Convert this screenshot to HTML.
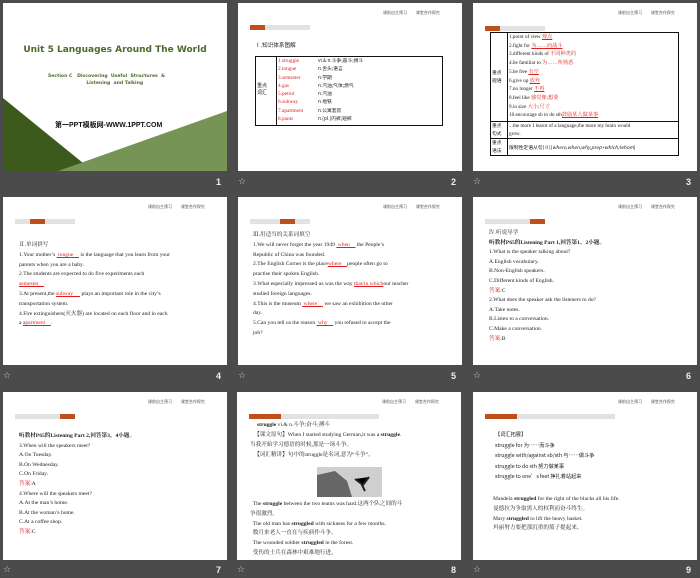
<!DOCTYPE html>
<html><head><meta charset="utf-8"><style>
*{margin:0;padding:0;box-sizing:border-box}
body{width:700px;height:578px;background:#4b4b4b;position:relative;overflow:hidden;font-family:"Liberation Serif","Noto Serif CJK SC",serif}
.s{position:absolute;width:224px;height:168px;background:#fff;overflow:hidden;color:#222}
.s>*{position:absolute;white-space:nowrap}
.n{position:absolute;color:#eee;font:bold 9px "Liberation Sans",sans-serif}
.st{position:absolute;color:#ccc;font:9px "DejaVu Sans",sans-serif}
.hd{top:7px;left:145px;font:4px "Noto Sans CJK SC",sans-serif;color:#555;word-spacing:8px}
.tb{top:22px;left:12px;width:60px;height:5px;background:#e2e2e2}
.tb i{position:absolute;top:0;width:15px;height:5px;background:#c0501a}
.t{font-size:5.6px;line-height:9.5px;color:#222}
.r{color:#e02020}
.u{text-decoration:underline}
</style></head><body>

<!-- slide 1 -->
<div class="s" style="left:3px;top:3px">
<div style="left:0;width:224px;top:42px;text-align:center;font:bold 9px 'DejaVu Sans',sans-serif;color:#4e6a2a">Unit 5 Languages Around The World</div>
<div style="left:45px;top:70px;font:bold 4.6px 'DejaVu Sans',sans-serif;color:#4e6a2a;line-height:7px">Section C &nbsp; Discovering &nbsp;Useful &nbsp;Structures &nbsp;&amp;<br>&nbsp;&nbsp;&nbsp;&nbsp;&nbsp;&nbsp;&nbsp;&nbsp;&nbsp;&nbsp;&nbsp;&nbsp;&nbsp;&nbsp;&nbsp;&nbsp;&nbsp;&nbsp;&nbsp;&nbsp;&nbsp;&nbsp;&nbsp;&nbsp;Listening &nbsp;and Talking</div>
<svg style="left:0;top:0" width="224" height="168"><polygon points="0,95 80,160 62,168 0,168" fill="#3b5a1c"/><polygon points="55,168 224,108 224,168" fill="#779457"/></svg>
<div style="left:52px;top:117px;font:bold 7px 'Liberation Sans','Noto Sans CJK SC',sans-serif;color:#111">第一PPT模板网-WWW.1PPT.COM</div>
</div>
<div class="n" style="left:216px;top:177px">1</div>

<!-- slide 2 -->
<div class="s" style="left:238px;top:3px">
<div class="hd">课前自主预习 课堂合作探究</div>
<div class="tb"><i style="left:0"></i></div>
<div class="t" style="left:17px;top:38px;font-family:'Noto Sans CJK SC',sans-serif">Ⅰ.知识体系图解</div>
<div style="left:17px;top:53px;width:188px;height:70px;border:1.3px solid #111"></div>
<div style="left:38px;top:53px;height:70px;border-left:1px solid #111"></div>
<div class="t" style="left:19px;top:79px;font-size:5px;line-height:7px;font-family:'Noto Sans CJK SC',sans-serif">重点<br>词汇</div>
<div class="t r" style="left:40px;top:54px;font-size:5.3px;line-height:8.3px">1.struggle<br>2.tongue<br>3.semester<br>4.gas<br>5.petrol<br>6.subway<br>7.apartment<br>8.pants</div>
<div class="t" style="left:80px;top:54px;font-size:4.8px;line-height:8.3px;font-family:'Noto Sans CJK SC',sans-serif">vi.&amp; n.斗争;奋斗;搏斗<br>n.舌头;语言<br>n.学期<br>n.汽油;气体;燃气<br>n.汽油<br>n.地铁<br>n.公寓套房<br>n.[pl.]内裤;短裤</div>
</div>
<div class="n" style="left:451px;top:177px">2</div>
<div class="st" style="left:238px;top:177px">☆</div>

<!-- slide 3 -->
<div class="s" style="left:473px;top:3px">
<div class="hd">课前自主预习 课堂合作探究</div>
<div class="tb" style="top:23px;left:12px"><i style="left:0"></i></div>
<div style="left:17px;top:29px;width:189px;height:124px;border:1.3px solid #111"></div>
<div style="left:34px;top:29px;height:124px;border-left:1px solid #111"></div>
<div style="left:17px;top:118px;width:189px;border-top:1px solid #111"></div>
<div style="left:17px;top:135px;width:189px;border-top:1px solid #111"></div>
<div class="t" style="left:19px;top:66px;font-size:4.8px;line-height:8px;font-family:'Noto Sans CJK SC',sans-serif">重点<br>短语</div>
<div class="t" style="left:19px;top:119px;font-size:4.8px;line-height:8px;font-family:'Noto Sans CJK SC',sans-serif">重点<br>句式</div>
<div class="t" style="left:19px;top:136px;font-size:4.8px;line-height:8px;font-family:'Noto Sans CJK SC',sans-serif">重点<br>语法</div>
<div class="t" style="left:36px;top:30px;font-size:5.2px;line-height:8.7px">1.point of view <span class="r u">观点</span><br>2.fight for <span class="r u">为……而战斗</span><br>3.different kinds of <span class="r">不同种类的</span><br>4.be familiar to <span class="r">为……所熟悉</span><br>5.be free <span class="r u">有空</span><br>6.give up <span class="r u">放弃</span><br>7.no longer <span class="r u">不再</span><br>8.feel like <span class="r">感觉像;想要</span><br>9.in size <span class="r">大小;尺寸</span><br>10.encourage sb to do sth<span class="r u">鼓励某人做某事</span></div>
<div class="t" style="left:36px;top:119px;font-size:5.2px;line-height:8px">...the more I learnt of a language,the more my brain would<br>grow.</div>
<div class="t" style="left:36px;top:140px;font-size:4.8px;font-family:'Noto Sans CJK SC',sans-serif">限制性定语从句(Ⅱ)(<i>where,when,why,prep+which/whom</i>)</div>
</div>
<div class="n" style="left:686px;top:177px">3</div>
<div class="st" style="left:473px;top:177px">☆</div>

<!-- slide 4 -->
<div class="s" style="left:3px;top:197px">
<div class="hd">课前自主预习 课堂合作探究</div>
<div class="tb"><i style="left:15px"></i></div>
<div class="t" style="left:16px;top:44px;line-height:9.8px">Ⅱ.单词拼写<br>1.Your mother’s <span class="r u">&nbsp;tongue&nbsp;&nbsp;&nbsp;&nbsp;</span> is the language that you learn from your<br>parents when you are a baby.<br>2.The students are expected to do five experiments each<br><span class="r u">semester&nbsp;&nbsp;&nbsp;&nbsp;</span>.<br>3.At present,the <span class="r u">subway&nbsp;&nbsp;&nbsp;&nbsp;&nbsp;</span> plays an important role in the city’s<br>transportation system.<br>4.Fire extinguishers(灭火器) are located on each floor and in each<br>a <span class="r u">apartment&nbsp;&nbsp;&nbsp;&nbsp;</span>.</div>
</div>
<div class="n" style="left:216px;top:371px">4</div>
<div class="st" style="left:3px;top:371px">☆</div>

<!-- slide 5 -->
<div class="s" style="left:238px;top:197px">
<div class="hd">课前自主预习 课堂合作探究</div>
<div class="tb"><i style="left:30px"></i></div>
<div class="t" style="left:15px;top:34px;line-height:9.8px">Ⅲ.用适当的关系词填空<br>1.We will never forget the year 1949 <span class="r u">&nbsp;when&nbsp;&nbsp;&nbsp;&nbsp;</span> the People’s<br>Republic of China was founded.<br>2.The English Corner is the place<span class="r u">where&nbsp;&nbsp;&nbsp;&nbsp;</span>people often go to<br>practise their spoken English.<br>3.What especially impressed us was the way <span class="r u">that/in which</span>our teacher<br>studied foreign languages.<br>4.This is the museum <span class="r u">&nbsp;where&nbsp;&nbsp;&nbsp;&nbsp;</span> we saw an exhibition the other<br>day.<br>5.Can you tell us the reason <span class="r u">&nbsp;why&nbsp;&nbsp;&nbsp;&nbsp;</span> you refused to accept the<br>job?</div>
</div>
<div class="n" style="left:451px;top:371px">5</div>
<div class="st" style="left:238px;top:371px">☆</div>

<!-- slide 6 -->
<div class="s" style="left:473px;top:197px">
<div class="hd">课前自主预习 课堂合作探究</div>
<div class="tb"><i style="left:45px"></i></div>
<div class="t" style="left:16px;top:32px;line-height:9.6px">Ⅳ.听说导学<br><b>听教材P65的Listening Part 1,回答第1、2小题。</b><br>1.What is the speaker talking about?<br>A.English vocabulary.<br>B.Non-English speakers.<br>C.Different kinds of English.<br><span class="r">答案</span>:C<br>2.What does the speaker ask the listeners to do?<br>A.Take notes.<br>B.Listen to a conversation.<br>C.Make a conversation.<br><span class="r">答案</span>:B</div>
</div>
<div class="n" style="left:686px;top:371px">6</div>
<div class="st" style="left:473px;top:371px">☆</div>

<!-- slide 7 -->
<div class="s" style="left:3px;top:392px">
<div class="hd">课前自主预习 课堂合作探究</div>
<div class="tb"><i style="left:45px"></i></div>
<div class="t" style="left:16px;top:40px;line-height:9.6px"><b>听教材P65的Listening Part 2,回答第3、4小题。</b><br>3.When will the speakers meet?<br>A.On Tuesday.<br>B.On Wednesday.<br>C.On Friday.<br><span class="r">答案</span>:A<br>4.Where will the speakers meet?<br>A.At the man’s home.<br>B.At the woman’s home.<br>C.At a coffee shop.<br><span class="r">答案</span>:C</div>
</div>
<div class="n" style="left:216px;top:565px">7</div>
<div class="st" style="left:3px;top:565px">☆</div>

<!-- slide 8 -->
<div class="s" style="left:237px;top:392px">
<div class="hd">课前自主预习 课堂合作探究</div>
<div class="tb" style="left:12px;width:130px;top:22px"><i style="left:0;width:32px"></i></div>
<div class="t" style="left:13px;top:28px;line-height:10px">&nbsp;&nbsp;&nbsp;&nbsp;&nbsp;<b>struggle</b> vi.&amp; n.斗争;奋斗;搏斗<br>&nbsp;&nbsp;&nbsp;【课文原句】When I started studying German,it was a <b>struggle</b>.<br>当我开始学习德语的时候,那是一场斗争。<br>&nbsp;&nbsp;&nbsp;【词汇精讲】句中的struggle是名词,意为“斗争”。</div>
<svg style="left:80px;top:75px" width="65" height="30"><rect width="65" height="30" fill="#cfcfcf"/><polygon points="0,30 0,8 18,4 30,14 35,30" fill="#666"/><path d="M38 12 L46 18 L52 10 M44 16 L48 24" stroke="#222" stroke-width="2"/></svg>
<div class="t" style="left:13px;top:108px;line-height:9.8px">&nbsp;&nbsp;The <b>struggle</b> between the two teams was hard.这两个队之间的斗<br>争很激烈。<br>&nbsp;&nbsp;The old man has <b>struggled</b> with sickness for a few months.<br>&nbsp;&nbsp;数月来老人一直在与疾病作斗争。<br>&nbsp;&nbsp;The wounded soldier <b>struggled</b> in the forest.<br>&nbsp;&nbsp;受伤的士兵在森林中艰难地行进。</div>
</div>
<div class="n" style="left:451px;top:565px">8</div>
<div class="st" style="left:237px;top:565px">☆</div>

<!-- slide 9 -->
<div class="s" style="left:473px;top:392px">
<div class="hd">课前自主预习 课堂合作探究</div>
<div class="tb" style="left:12px;width:130px;top:22px"><i style="left:0;width:32px"></i></div>
<div class="t" style="left:22px;top:38px;line-height:10.5px;font-size:5.2px;font-family:'Noto Sans CJK SC',sans-serif">【词汇拓展】<br>struggle for 为……而斗争<br>struggle with/against sb/sth 与……做斗争<br>struggle to do sth 努力做某事<br>struggle to one’s feet 挣扎着站起来</div>
<div class="t" style="left:20px;top:103px;line-height:9.8px">Mandela <b>struggled</b> for the right of the blacks all his life.<br>曼德拉为争取黑人的权利而奋斗终生。<br>Mary <b>struggled</b> to lift the heavy basket.<br>玛丽努力要把那沉重的篮子提起来。</div>
</div>
<div class="n" style="left:686px;top:565px">9</div>
<div class="st" style="left:473px;top:565px">☆</div>
</body></html>
